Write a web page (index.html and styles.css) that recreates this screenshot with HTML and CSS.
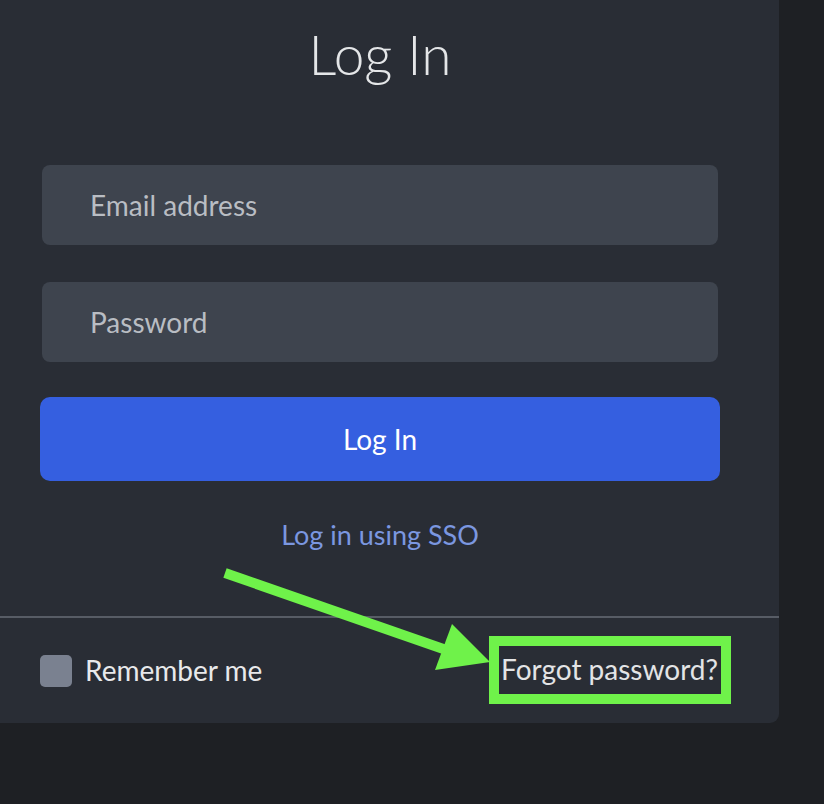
FILE: index.html
```html
<!DOCTYPE html>
<html lang="en">
<head>
  <meta charset="UTF-8">
  <title>Log In</title>
  <link rel="stylesheet" href="styles.css">
</head>
<body>

  <div class="card">
    <div class="card-body">
      <h1>Log In</h1>

      <form class="login-form">
        <input type="email" placeholder="Email address">
        <input type="password" placeholder="Password">
        <button type="submit">Log In</button>
      </form>

      <a class="sso" href="#">Log in using SSO</a>
    </div>

    <div class="card-footer">
      <label class="remember">
        <input type="checkbox">
        <span>Remember me</span>
      </label>
      <span class="highlight"><a class="forgot" href="#">Forgot password?</a></span>
    </div>
  </div>

  <!-- annotation arrow drawn over the screenshot -->
  <svg class="arrow" width="824" height="804" viewBox="0 0 824 804">
    <line x1="225" y1="573" x2="452" y2="652" stroke="#6ff24a" stroke-width="10"/>
    <polygon points="452,624 490,662 435,670" fill="#6ff24a"/>
  </svg>

</body>
</html>
```

FILE: styles.css
```css
body {
  margin: 0;
  background-color: #1e2024;
  font-family: Lato, 'Open Sans', sans-serif;
  color: #e6e7e9;
  overflow: hidden;
}

.card {
  width: 798px;
  margin-left: -19px;
  background-color: #292d35;
  border-radius: 0 0 9px 9px;
}

.card-body {
  padding: 21px 61px 66px;
  text-align: center;
}

h1 {
  margin: 0;
  font-size: 55px;
  line-height: 66px;
  font-weight: 300;
  color: #e4e6e8;
}

.login-form {
  display: flex;
  flex-direction: column;
  margin-top: 78px;
}

.login-form input {
  height: 80px;
  margin: 0 0 37px;
  padding: 0 0 0 48px;
  border: none;
  border-radius: 8px;
  background-color: #3e444e;
  color: #ffffff;
  font-family: inherit;
  font-size: 28px;
  outline: none;
}

.login-form input::placeholder {
  color: #b9bdc3;
}

.login-form input + input {
  margin-bottom: 35px;
}

.login-form button {
  height: 84px;
  margin: 0 -2px;
  border: none;
  border-radius: 10px;
  background-color: #355fe0;
  color: #ffffff;
  font-family: inherit;
  font-size: 28px;
  cursor: pointer;
}

.sso {
  display: inline-block;
  margin-top: 38px;
  font-size: 27px;
  line-height: 31px;
  color: #7b97e0;
  text-decoration: none;
}

.card-footer {
  display: flex;
  align-items: center;
  justify-content: space-between;
  height: 105px;
  padding: 0 58px 0 59px;
  border-top: 2px solid #575c65;
}

.remember {
  display: flex;
  align-items: center;
  gap: 13px;
  font-size: 28px;
  line-height: 31px;
  color: #e8e9eb;
}

.remember span {
  margin-top: -1px;
}

.remember input {
  appearance: none;
  width: 32px;
  height: 32px;
  margin: 0;
  border-radius: 5px;
  background-color: #7a8190;
}

/* green annotation box round the link */
.highlight {
  display: inline-block;
  padding: 8px 3px 9px 2px;
  outline: 10px solid #6ff24a;
  margin-top: -1px;
}

.forgot {
  font-size: 28px;
  line-height: 31px;
  color: #e3e4e6;
  text-decoration: none;
}

.arrow {
  position: absolute;
  left: 0;
  top: 0;
  pointer-events: none;
}
```
